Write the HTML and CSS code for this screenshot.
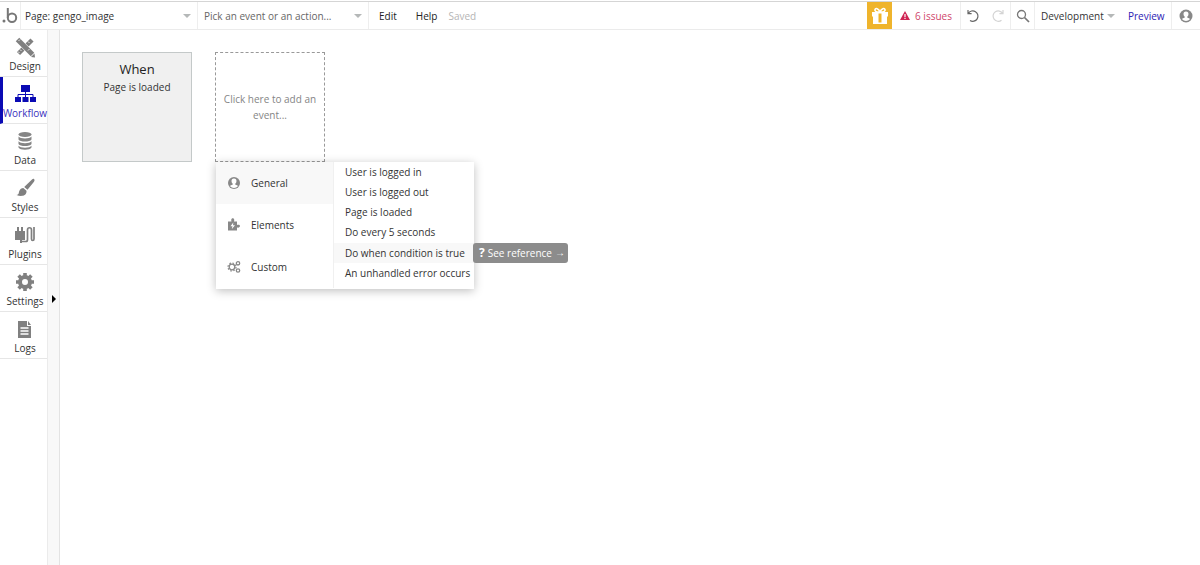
FILE: index.html
```html
<!DOCTYPE html>
<html lang="en">
<head>
<meta charset="utf-8">
<title>Workflow editor</title>
<link rel="stylesheet" href="styles.css">
</head>
<body>
<header class="topbar">
  <a class="brand" href="#" aria-label="Home">
    <svg width="16" height="18" viewBox="0 0 16 18"><circle cx="2" cy="14" r="1.500" fill="#777"/><path d="M5.800 1v9.700" stroke="#777" stroke-width="2" fill="none"/><circle cx="10" cy="10.700" r="4.200" stroke="#777" stroke-width="2" fill="none"/></svg>
  </a>
  <div class="picker picker-page"><select aria-label="Page"><option>Page: gengo_image</option></select><span class="caret"></span></div>
  <div class="picker picker-event"><select aria-label="Event or action"><option>Pick an event or an action...</option></select><span class="caret"></span></div>
  <nav class="menus"><button>Edit</button><button>Help</button><span class="saved">Saved</span></nav>
  <div class="tools">
    <button class="gift" aria-label="Gift">
      <svg width="18" height="18" viewBox="0 0 18 18"><path d="M8 5C5 5 3.500 4 4 2.500S7.500 1 9 5c1.500-4 4.500-4 5-2.500S13 5 10 5" fill="none" stroke="#fff" stroke-width="1.600"/><path d="M1 5h16v4.500H1zM2 9h14v8H2z" fill="#fff"/><path d="M7.500 6.500h3v9h-3z" fill="#efb42c"/></svg>
    </button>
    <button class="issues"><svg width="10" height="9" viewBox="0 0 10 9"><path d="M5 0l5 9H0z" fill="#cf2453"/><path d="M4.400 3h1.200v3H4.400zm0 3.800h1.200V8H4.400z" fill="#fff"/></svg>6 issues</button>
    <div class="history">
      <button aria-label="Undo"><svg width="14" height="14" viewBox="0 0 14 14" fill="none" stroke="#666" stroke-width="1.200"><path d="M2 1v3.600h3.600M2.300 4.400A5.200 5.200 0 1 1 4 11.500"/></svg></button>
      <button aria-label="Redo"><svg width="14" height="14" viewBox="0 0 14 14" fill="none" stroke="#d4d4d4" stroke-width="1.200"><path d="M12 1v3.600H8.400M11.700 4.400A5.200 5.200 0 1 0 10.500 11.200"/></svg></button>
    </div>
    <button class="search" aria-label="Search"><svg width="14" height="14" viewBox="0 0 14 14" fill="none" stroke="#777"><circle cx="5.500" cy="5.500" r="4" stroke-width="1.300"/><path d="M8.500 8.500L13 13" stroke-width="1.700"/></svg></button>
    <div class="picker picker-version"><select aria-label="Version"><option>Development</option></select><span class="caret"></span></div>
    <a class="preview" href="#">Preview</a>
    <button class="account" aria-label="Account"><svg width="14" height="14" viewBox="0 0 14 14"><circle cx="7" cy="7" r="6.500" fill="#888"/><path d="M7 2.500c3.400 0 2.800 4 1.200 5.300v.8c1.500.6 2.400.8 2.700 1.600a5.200 5.200 0 0 1-7.800 0c.3-.8 1.200-1 2.700-1.600v-.8C4.200 6.500 3.600 2.500 7 2.500z" fill="#fff"/></svg></button>
  </div>
</header>
<div class="workspace">
  <nav class="sidebar">
    <a class="tab" href="#"><svg width="22" height="22" viewBox="0 0 22 22"><path d="M4.500 17.500L18 4" stroke="#808080" stroke-width="4.500"/><path d="M17 21l3.500-3.500.5 4z" fill="#808080"/><path d="M3.500 3.500l15 15" stroke="#fff" stroke-width="6"/><path d="M3.500 3.500l15 15" stroke="#808080" stroke-width="5"/><path d="M6 3.500l-1.500 1.500M15.500 13l-1.500 1.500M6 13.500l1.500 1.500M4 15.500L5.500 17M14 5.500L15.500 7" stroke="#fff" stroke-width=".8"/></svg>Design</a>
    <a class="tab active" href="#"><svg width="22" height="22" viewBox="0 0 22 22"><path d="M7 2h9v7H7zM1 14h6v5H1zm7.500 0h6v5h-6zm7.500 0h6v5h-6z" fill="#0a0ab4"/><path d="M11.500 9v5M4 14v-2.500h15V14" stroke="#0a0ab4" fill="none"/></svg>Workflow</a>
    <a class="tab" href="#"><svg width="22" height="22" viewBox="0 0 22 22" fill="#858585"><ellipse cx="11" cy="4.500" rx="6.500" ry="2.500"/><path d="M4.500 6.500c1.500 2.600 11.500 2.600 13 0v3c-1.500 2.700-11.500 2.700-13 0zM4.500 11.300c1.500 2.600 11.500 2.600 13 0v2.700c-1.500 2.700-11.500 2.700-13 0zM4.500 15.800c1.500 2.600 11.500 2.600 13 0v1.700c-1.500 3-11.500 3-13 0z"/></svg>Data</a>
    <a class="tab" href="#"><svg width="22" height="22" viewBox="0 0 22 22" fill="#808080"><path d="M20 2c1 .8.500 1.800 0 2.700l-6.500 8-3.300-2.800L18 2.500c.7-.5 1.300-.9 2-.5zM9.300 10.900l3.200 2.800c.5 5-5 6.300-10 4.300 2.700-.5 2-1.800 2.800-4 .7-2.200 2.300-3 4-3.100z"/></svg>Styles</a>
    <a class="tab" href="#"><svg width="22" height="22" viewBox="0 0 22 22"><path d="M3 3h2v4h2V3h2v4h2v9H8v3H6v-3H1V7h2z" fill="#808080"/><path d="M7 17.500h5c1.500 0 1.500-1 1.500-2V6c0-3 4-3 4 0v9c0 2 2.500 2 2.500 0V3" fill="none" stroke="#808080" stroke-width="1.700"/></svg>Plugins</a>
    <a class="tab" href="#"><svg width="22" height="22" viewBox="0 0 22 22"><circle cx="11" cy="11" r="5" fill="none" stroke="#808080" stroke-width="4"/><path d="M11 2v4m0 10v4M2 11h4m10 0h4M4.600 4.600l3 3m6.800 6.800l3 3m0-12.800l-3 3m-6.800 6.800l-3 3" stroke="#808080" stroke-width="3.600"/></svg>Settings</a>
    <a class="tab" href="#"><svg width="22" height="22" viewBox="0 0 22 22"><path d="M4 3h9v5h4v12H4zM14 3l3 4h-3z" fill="#808080"/><path d="M6.500 10h8M6.500 13h8M6.500 16h8" stroke="#fff" stroke-width="1.300"/></svg>Logs</a>
  </nav>
  <button class="expander" aria-label="Expand panel"><svg width="4" height="8" viewBox="0 0 4 8"><path d="M0 0l4 4-4 4z"/></svg></button>
  <main class="canvas">
    <button class="event"><span class="event-title">When</span><span>Page is loaded</span></button>
    <div class="slot">
      <button class="add-event">Click here to add an event...</button>
      <div class="menu">
        <div class="groups">
          <button class="group selected"><svg width="14" height="14" viewBox="0 0 14 14"><circle cx="7" cy="7" r="6" fill="#888"/><path d="M7 2.500c3.400 0 2.800 4 1.200 5.300v.8c1.500.6 2.400.8 2.700 1.600a5.200 5.200 0 0 1-7.800 0c.3-.8 1.200-1 2.700-1.600v-.8C4.200 6.500 3.600 2.500 7 2.500z" fill="#fff"/></svg>General</button>
          <button class="group"><svg width="14" height="14" viewBox="0 0 14 14"><path d="M1 3.500h3.500c-1.500-4.500 4-4.500 2.500 0h3v3.500c4-1.500 4 3.500 0 2.500v3H1z" fill="#888"/><path d="M6.300 4.500L3.500 8.300h2l-.8 3 3.300-4H6z" fill="#fff"/></svg>Elements</button>
          <button class="group"><svg width="14" height="14" viewBox="0 0 14 14" fill="none" stroke="#888"><circle cx="5" cy="7" r="2.800" stroke-width="1.300"/><circle cx="5" cy="7" r="4" stroke-width="1.200" stroke-dasharray="1.600 1.541"/><circle cx="11" cy="3.300" r="1.700" stroke-width="1.300"/><circle cx="11" cy="10.500" r="1.700" stroke-width="1.300"/></svg>Custom</button>
        </div>
        <div class="choices">
          <button>User is logged in</button>
          <button>User is logged out</button>
          <button>Page is loaded</button>
          <button>Do every 5 seconds</button>
          <div class="choice-row"><button class="hovered">Do when condition is true</button><a class="reference" href="#"><b>?</b>See reference <span class="arrow">→</span></a></div>
          <button>An unhandled error occurs</button>
        </div>
      </div>
    </div>
  </main>
</div>
</body>
</html>
```
FILE: styles.css
```css
* { box-sizing: border-box; }
body {
  margin: 0;
  min-height: 100vh;
  display: flex;
  flex-direction: column;
  background: #fff;
  color: #333;
  font: 10px/16px "Open Sans", sans-serif;
}
button, select {
  font: inherit;
  color: inherit;
  border: 0;
  padding: 0;
  background: none;
  border-radius: 0;
}
a { color: inherit; text-decoration: none; }
svg { display: block; flex: none; }

.topbar {
  display: flex;
  height: 29px;
  margin-top: 1px;
  border-top: 1px solid #d5d5d5;
  border-bottom: 1px solid #ebebeb;
}
.brand {
  width: 21px;
  padding-left: 2px;
  display: flex;
  align-items: center;
  border-right: 1px solid #eee;
}
.picker { position: relative; display: flex; }
.picker select { appearance: none; width: 100%; }
.picker-page { width: 177px; padding-left: 4px; border-right: 1px solid #eee; }
.picker-event { width: 171px; padding-left: 6px; border-right: 1px solid #eee; color: #666; }
.caret {
  position: absolute;
  right: 6px;
  top: 12px;
  border: 4px solid transparent;
  border-top-color: #b5b8b8;
  border-bottom: 0;
  pointer-events: none;
}
.menus { display: flex; align-items: center; padding-left: 10px; }
.menus button { margin-right: 19px; color: #222; }
.saved { color: #b5b5b5; margin-left: -8px; }
.tools { display: flex; margin-left: auto; }
.gift { width: 25px; display: grid; place-items: center; background: #efb42c; }
.issues {
  display: flex;
  align-items: center;
  justify-content: center;
  gap: 5px;
  width: 69px;
  color: #cf466b;
  border-right: 1px solid #eee;
}
.history { display: flex; align-items: center; gap: 11px; width: 50px; padding-left: 5px; border-right: 1px solid #eee; }
.search { width: 24px; display: grid; place-items: center; border-right: 1px solid #eee; }
.picker-version { width: 86px; padding-left: 6px; }
.preview { display: flex; align-items: center; width: 51px; padding-left: 7px; color: #2c22b4; border-right: 1px solid #eee; }
.account { width: 28px; display: grid; place-items: center; }

.workspace { flex: 1; display: flex; }
.sidebar { width: 48px; border-right: 1px solid #ebebeb; }
.tab {
  height: 47px;
  display: flex;
  flex-direction: column;
  align-items: center;
  padding: 6px 0 0 3px;
  border-bottom: 1px solid #e6e6e6;
}
.tab.active { color: #3a30bd; border-left: 3px solid #0a0ab4; padding-left: 0; }
.expander {
  display: flex;
  width: 12px;
  padding: 265px 0 0 4px;
  background: #f8f8f8;
  border-right: 1px solid #e3e3e3;
}
.canvas { flex: 1; display: flex; align-items: flex-start; gap: 23px; padding: 22px; }
.event {
  width: 110px;
  height: 110px;
  display: flex;
  flex-direction: column;
  align-items: center;
  gap: 2px;
  padding-top: 8px;
  background: #f0f0f0;
  border: 1px solid #c4c9c9;
}
.event-title { font-size: 13px; color: #222; }
.slot { position: relative; }
.add-event {
  width: 110px;
  height: 110px;
  padding: 0 4px;
  border: 1px dashed #999;
  color: #858585;
}
.menu {
  position: absolute;
  top: 110px;
  left: 1px;
  width: 258px;
  padding-bottom: 1px;
  display: flex;
  background: #fff;
  box-shadow: 0 2px 9px rgba(0, 0, 0, .25);
}
.groups { width: 118px; border-right: 1px solid #f0f0f0; }
.group {
  width: 100%;
  height: 42px;
  display: flex;
  align-items: center;
  gap: 10px;
  padding-left: 11px;
}
.group.selected { background: #f8f8f8; }
.choices { flex: 1; display: flex; flex-direction: column; }
.choices button { width: 100%; height: 20px; padding-left: 11px; text-align: left; white-space: nowrap; }
.choice-row { position: relative; display: flex; margin-top: 1px; }
.choices .hovered { background: #f8f8f8; }
.reference {
  position: absolute;
  left: 139px;
  top: 0;
  height: 20px;
  width: 95px;
  display: flex;
  align-items: center;
  gap: 3px;
  padding-left: 6px;
  border-radius: 3px;
  background: #8c8c8c;
  color: #fff;
  white-space: nowrap;
}
.reference b { font-size: 12px; }
.arrow { font-family: "Liberation Sans", sans-serif; }
```
